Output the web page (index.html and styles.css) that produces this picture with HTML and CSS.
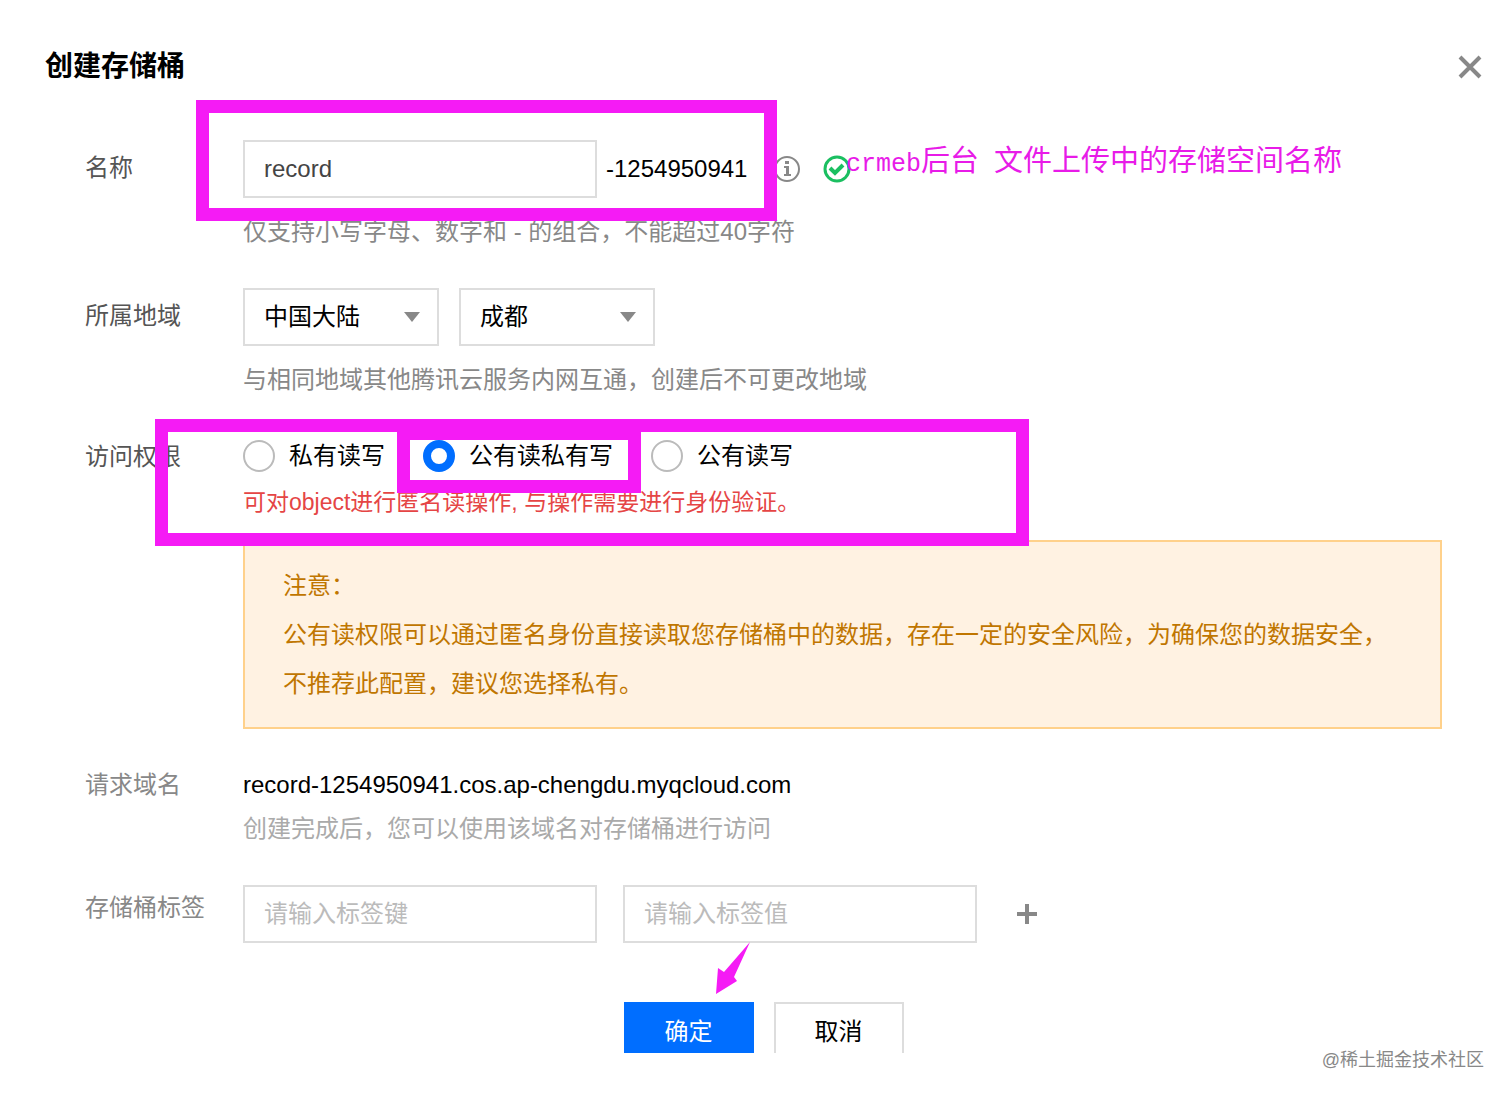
FILE: index.html
```html
<!DOCTYPE html>
<html lang="zh-CN">
<head>
    <meta charset="UTF-8">
    <meta name="viewport" content="width=device-width, initial-scale=1.0">
    <title>创建存储桶</title>
    <link rel="stylesheet" href="styles.css">
</head>
<body>

    <form class="dialog">
        <div class="dialog-header">
            <h2>创建存储桶</h2>
            <button type="button" class="icon-btn" aria-label="关闭">
                <svg width="26" height="26" viewBox="0 0 26 26"><path d="M3 3L23 23M23 3L3 23" stroke="#888" stroke-width="4" fill="none"/></svg>
            </button>
        </div>

        <div class="dialog-body">
            <!-- Bucket name -->
            <div class="row">
                <label class="row-label" for="name">名称</label>
                <div class="field">
                    <div class="controls">
                        <input type="text" id="name" class="text-input" value="record">
                        <span class="suffix">-1254950941</span>
                        <svg class="info-icon" width="28" height="28" viewBox="0 0 28 28">
                            <circle cx="14" cy="14" r="12" fill="none" stroke="#888" stroke-width="2"/>
                            <path d="M12 6h4v3h-4zM11 11h5v8h2v2h-7v-2h2v-6h-2z" fill="#888"/>
                        </svg>
                        <svg class="check-icon" width="28" height="28" viewBox="0 0 28 28">
                            <circle cx="14" cy="14" r="12" fill="none" stroke="#1bbf61" stroke-width="3"/>
                            <path d="M7 13l5 5 8-8" fill="none" stroke="#1bbf61" stroke-width="4"/>
                        </svg>
                    </div>
                    <p class="hint">仅支持小写字母、数字和 - 的组合，不能超过40字符</p>
                    <span class="mark mark-name"></span>
                    <span class="note"><span class="note-latin">crmeb</span>后台<span class="note-latin"> </span>文件上传中的存储空间名称</span>
                </div>
            </div>

            <!-- Region -->
            <div class="row">
                <label class="row-label" for="area">所属地域</label>
                <div class="field">
                    <div class="controls selects">
                        <div class="select">
                            <select id="area"><option>中国大陆</option></select>
                        </div>
                        <div class="select">
                            <select id="city" aria-label="城市"><option>成都</option></select>
                        </div>
                    </div>
                    <p class="hint">与相同地域其他腾讯云服务内网互通，创建后不可更改地域</p>
                </div>
            </div>

            <!-- Access permission -->
            <div class="row row-text">
                <span class="row-label">访问权限</span>
                <div class="field">
                    <div class="radios">
                        <label class="radio"><input type="radio" name="acl">私有读写</label>
                        <label class="radio"><input type="radio" name="acl" checked>公有读私有写<span class="mark mark-option"></span></label>
                        <label class="radio"><input type="radio" name="acl">公有读写</label>
                    </div>
                    <p class="hint error">可对object进行匿名读操作, 与操作需要进行身份验证。</p>
                    <div class="notice">
                        <p>注意：</p>
                        <p>公有读权限可以通过匿名身份直接读取您存储桶中的数据，存在一定的安全风险，为确保您的数据安全，<br>不推荐此配置，建议您选择私有。</p>
                    </div>
                    <span class="mark mark-acl"></span>
                </div>
            </div>

            <!-- Request domain -->
            <div class="row row-text muted">
                <span class="row-label">请求域名</span>
                <div class="field">
                    <p class="domain">record-1254950941.cos.ap-chengdu.myqcloud.com</p>
                    <p class="hint light">创建完成后，您可以使用该域名对存储桶进行访问</p>
                </div>
            </div>

            <!-- Tags -->
            <div class="row row-tags muted">
                <label class="row-label" for="tagKey">存储桶标签</label>
                <div class="field controls tags">
                    <input type="text" id="tagKey" class="text-input" placeholder="请输入标签键">
                    <div class="tag-value">
                        <input type="text" class="text-input" placeholder="请输入标签值" aria-label="标签值">
                        <svg class="arrow" width="36" height="54" viewBox="0 0 36 54"><path d="M36 1L10 31 4 27 2 53 23 40 20 36Z" fill="#f51bf5"/></svg>
                    </div>
                    <button type="button" class="icon-btn add" aria-label="添加标签">
                        <svg width="20" height="20" viewBox="0 0 20 20"><path d="M10 0V20M0 10H20" stroke="#888" stroke-width="4"/></svg>
                    </button>
                </div>
            </div>

            <div class="dialog-footer">
                <button type="submit" class="btn btn-primary">确定</button>
                <button type="button" class="btn">取消</button>
            </div>
        </div>
    </form>

    <div class="watermark">@稀土掘金技术社区</div>

</body>
</html>
```
FILE: styles.css
```css
* {
    box-sizing: border-box;
}

body {
    margin: 0;
    background-color: #fff;
    color: #000;
    font-family: "Liberation Sans", "Noto Sans CJK SC", sans-serif;
    font-size: 24px;
    line-height: 36px;
}

h2, p {
    margin: 0;
}

input, select, button {
    font: inherit;
    color: inherit;
    border-radius: 0;
}

.dialog-header {
    display: flex;
    justify-content: space-between;
    align-items: center;
    padding: 47px 29px 53px 45px;
}

.dialog-header h2 {
    font-size: 28px;
    line-height: 40px;
}

.icon-btn {
    display: flex;
    padding: 0;
    border: none;
    background: none;
    cursor: pointer;
}

.dialog-body {
    padding: 0 70px 0 85px;
}

.row {
    display: flex;
    margin-bottom: 38px;
}

.row-label {
    flex: 0 0 158px;
    line-height: 56px;
    color: #555;
}

.muted .row-label {
    color: #888;
}

.row-text .row-label {
    line-height: 42px;
}

.row-text.muted .row-label {
    line-height: 36px;
}

.row-tags .row-label {
    line-height: 46px;
}

.field {
    position: relative;
    flex: 1;
}

.controls {
    display: flex;
    align-items: center;
}

.text-input {
    width: 354px;
    height: 58px;
    padding: 0 19px;
    border: 2px solid #ddd;
    background-color: #fff;
    color: #444;
}

.text-input::placeholder {
    color: #bbb;
    opacity: 1;
}

.suffix {
    margin-left: 9px;
}

.info-icon {
    margin-left: 26px;
}

.check-icon {
    margin-left: 22px;
}

.hint {
    margin-top: 16px;
    color: #888;
}

.row-text .hint {
    margin-top: 8px;
}

.hint.light {
    color: #aaa;
}

.hint.error {
    color: #e54545;
    font-size: 23px;
}

.selects {
    gap: 20px;
}

.select {
    position: relative;
    width: 196px;
}

.select select {
    width: 100%;
    height: 58px;
    padding: 0 19px;
    border: 2px solid #ddd;
    background-color: #fff;
    appearance: none;
}

.select::after {
    content: "";
    position: absolute;
    right: 19px;
    top: 24px;
    border: 8px solid transparent;
    border-top: 10px solid #888;
    border-bottom: none;
    pointer-events: none;
}

.radios {
    display: flex;
    gap: 38px;
}

.radio {
    position: relative;
    display: flex;
    align-items: center;
    gap: 14px;
    line-height: 40px;
}

.radio input {
    appearance: none;
    width: 32px;
    height: 32px;
    margin: 0;
    border: 2px solid #bbb;
    border-radius: 50%;
    background-color: #fff;
}

.radio input:checked {
    border: 8px solid #006eff;
}

.notice {
    margin-top: 20px;
    padding: 19px 38px;
    border: 2px solid #ffd18b;
    background-color: #fff2e2;
    color: #c07600;
    line-height: 49px;
}

.tags {
    gap: 26px;
}

.tag-value {
    position: relative;
    display: flex;
}

.add {
    margin-left: 14px;
}

/* The footer runs under the bottom edge of the dialog */
.dialog-footer {
    display: flex;
    justify-content: center;
    gap: 20px;
    height: 51px;
    margin-top: 59px;
    overflow: hidden;
}

.btn {
    width: 130px;
    height: 60px;
    padding: 0;
    border: 2px solid #ddd;
    background-color: #fff;
    cursor: pointer;
}

.btn-primary {
    border-color: #006eff;
    background-color: #006eff;
    color: #fff;
}

/* Hand-drawn marks over the form */
.mark {
    position: absolute;
    border: 13px solid #f51bf5;
    pointer-events: none;
}

.mark-name {
    left: -47px;
    top: -40px;
    width: 581px;
    height: 121px;
}

.mark-acl {
    left: -88px;
    top: -17px;
    width: 874px;
    height: 127px;
}

.mark-option {
    z-index: 1;
    left: -26px;
    top: -9px;
    width: 244px;
    height: 66px;
}

.note {
    position: absolute;
    left: 603px;
    top: -2px;
    color: #e81be8;
    font-family: "Noto Sans CJK SC", sans-serif;
    font-size: 29px;
    line-height: 40px;
    white-space: pre;
}

.note-latin {
    font-family: "Liberation Mono", monospace;
    font-size: 25px;
}

.arrow {
    position: absolute;
    left: 91px;
    top: 56px;
}

.watermark {
    padding-right: 28px;
    margin-top: -11px;
    color: #888;
    font-size: 18px;
    text-align: right;
}
```
